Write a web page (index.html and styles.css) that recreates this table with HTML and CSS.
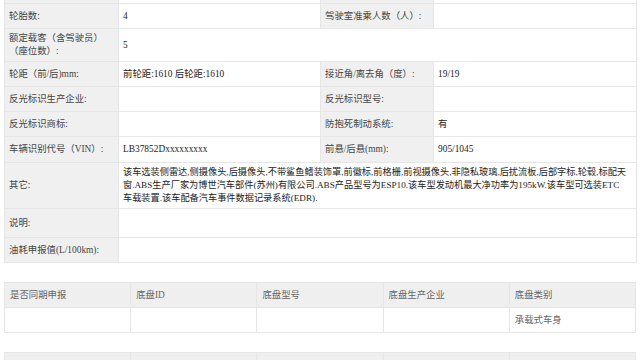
FILE: index.html
```html
<!DOCTYPE html>
<html lang="zh-CN">
<head>
<meta charset="utf-8">
<link rel="stylesheet" href="styles.css">
</head>
<body>
<div class="page">
  <table class="spec">
    <colgroup><col class="c-l1"><col class="c-v1"><col class="c-l2"><col class="c-v2"></colgroup>
    <tr class="r-cut"><td class="lbl"></td><td></td><td class="lbl"></td><td></td></tr>
    <tr class="r"><td class="lbl">轮胎数:</td><td>4</td><td class="lbl">驾驶室准乘人数（人）:</td><td></td></tr>
    <tr class="r"><td class="lbl">额定载客（含驾驶员）（座位数）:</td><td colspan="3">5</td></tr>
    <tr class="r"><td class="lbl">轮距（前/后)mm:</td><td>前轮距:1610 后轮距:1610</td><td class="lbl">接近角/离去角（度）:</td><td>19/19</td></tr>
    <tr class="r"><td class="lbl">反光标识生产企业:</td><td></td><td class="lbl">反光标识型号:</td><td></td></tr>
    <tr class="r"><td class="lbl">反光标识商标:</td><td></td><td class="lbl">防抱死制动系统:</td><td>有</td></tr>
    <tr class="r r-vin"><td class="lbl">车辆识别代号（VIN）:</td><td>LB37852Dxxxxxxxxx</td><td class="lbl">前悬/后悬(mm):</td><td>905/1045</td></tr>
    <tr class="r"><td class="lbl">其它:</td><td colspan="3" class="long">该车选装侧雷达,侧摄像头,后摄像头,不带鲨鱼鳍装饰罩,前徽标,前格栅,前视摄像头,非隐私玻璃,后扰流板,后部字标,轮毂,标配天窗.ABS生产厂家为博世汽车部件(苏州)有限公司.ABS产品型号为ESP10.该车型发动机最大净功率为195kW.该车型可选装ETC<br>车载装置.该车配备汽车事件数据记录系统(EDR).</td></tr>
    <tr class="r r-note"><td class="lbl">说明:</td><td colspan="3"></td></tr>
    <tr class="r"><td class="lbl">油耗申报值(L/100km):</td><td colspan="3"></td></tr>
  </table>

  <table class="grid">
    <tr class="head"><td>是否同期申报</td><td>底盘ID</td><td>底盘型号</td><td>底盘生产企业</td><td>底盘类别</td></tr>
    <tr class="body"><td></td><td></td><td></td><td></td><td>承载式车身</td></tr>
  </table>

  <table class="grid">
    <tr class="head"><td>&nbsp;</td><td>&nbsp;</td><td>&nbsp;</td><td>&nbsp;</td><td>&nbsp;</td></tr>
  </table>
</div>
</body>
</html>
```
FILE: styles.css
```css
html, body {
  margin: 0;
  padding: 0;
  background: #ffffff;
}
body {
  font-family: "Liberation Serif", "Noto Sans CJK SC", serif;
  font-size: 9.4px;
  line-height: 13px;
  color: #222;
  overflow: hidden;
  height: 360px;
}
.page {
  padding: 0 4px;
  display: flex;
  flex-direction: column;
  gap: 19px;
}
table {
  width: 632px;
  border-collapse: collapse;
  table-layout: fixed;
}
td {
  border: 1px solid #e6e6e6;
  padding: 3px 4px;
  vertical-align: middle;
}
.spec {
  margin-top: -22px;
}
.long {
  font-size: 9.2px;
}
.c-l1 { width: 114px; }
.c-v1 { width: 202px; }
.c-l2 { width: 113px; }
.c-v2 { width: 203px; }
.r-cut { height: 25px; }
.r { height: 25px; }
.r-vin { height: 26px; }
.r-note { height: 29px; }
.lbl {
  background: #f0f0f0;
  color: #444;
}
.grid td {
  color: #666;
  padding: 3px 5px;
}
.grid .head td {
  background: #efefef;
  height: 25px;
  box-sizing: border-box;
}
.grid .body td {
  height: 25px;
  box-sizing: border-box;
}
```
